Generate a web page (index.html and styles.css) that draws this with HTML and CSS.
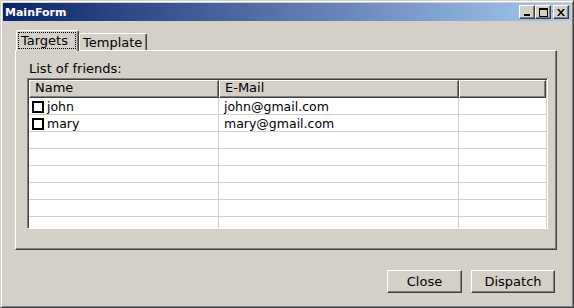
FILE: index.html
```html
<!DOCTYPE html>
<html lang="en">
<head>
    <meta charset="UTF-8">
    <title>MainForm</title>
    <link rel="stylesheet" href="styles.css">
</head>
<body>
    <div class="window">
        <div class="titlebar">
            <span class="title">MainForm</span>
            <div class="caption-buttons">
                <div class="cap-btn"><svg width="8" height="7" viewBox="0 0 8 7"><rect x="1" y="5" width="6" height="2" fill="#000"/></svg></div>
                <div class="cap-btn"><svg width="9" height="9" viewBox="0 0 9 9"><rect x="0.5" y="0.5" width="8" height="8" fill="none" stroke="#000"/><rect x="0" y="0" width="9" height="2" fill="#000"/></svg></div>
                <div class="cap-btn close"><svg width="8" height="7" viewBox="0 0 8 7"><path d="M0 0h2l2 2.5 2-2.5h2l-3 3.5 3 3.5h-2l-2-2.5-2 2.5h-2l3-3.5z" fill="#000"/></svg></div>
            </div>
        </div>

        <div class="client">
            <div class="tabs">
                <div class="tab active"><span class="focus">Targets</span></div>
                <div class="tab">Template</div>
            </div>
            <div class="tab-page">
                <div class="label">List of friends:</div>
                <div class="listview">
                    <div class="lv-header">
                        <div class="hcell">Name</div>
                        <div class="hcell">E-Mail</div>
                        <div class="hcell"></div>
                    </div>
                    <div class="lv-body">
                        <div class="row">
                            <div class="cell"><span class="check"></span>john</div>
                            <div class="cell">john@gmail.com</div>
                            <div class="cell"></div>
                        </div>
                        <div class="row">
                            <div class="cell"><span class="check"></span>mary</div>
                            <div class="cell">mary@gmail.com</div>
                            <div class="cell"></div>
                        </div>
                        <div class="row"><div class="cell"></div><div class="cell"></div><div class="cell"></div></div>
                        <div class="row"><div class="cell"></div><div class="cell"></div><div class="cell"></div></div>
                        <div class="row"><div class="cell"></div><div class="cell"></div><div class="cell"></div></div>
                        <div class="row"><div class="cell"></div><div class="cell"></div><div class="cell"></div></div>
                        <div class="row"><div class="cell"></div><div class="cell"></div><div class="cell"></div></div>
                        <div class="row"><div class="cell"></div><div class="cell"></div><div class="cell"></div></div>
                    </div>
                </div>
            </div>
            <div class="actions">
                <button class="btn close-btn">Close</button>
                <button class="btn dispatch-btn">Dispatch</button>
            </div>
        </div>
    </div>
</body>
</html>
```

FILE: styles.css
```css
body {
    margin: 0;
    background-color: #d4d0c8;
    font-family: "DejaVu Sans", Verdana, sans-serif;
    font-size: 12px;
    color: #000;
}

.window {
    width: 574px;
    height: 308px;
    box-sizing: border-box;
    padding: 2px;
    background-color: #d4d0c8;
    border: 1px solid;
    border-color: #d4d0c8 #404040 #404040 #d4d0c8;
    box-shadow: inset 1px 1px #fff, inset -1px -1px #808080;
    display: flex;
    flex-direction: column;
}

.titlebar {
    height: 18px;
    display: flex;
    align-items: center;
    justify-content: space-between;
    padding: 0 2px 0 2px;
    background: linear-gradient(to right, #0a246a, #a6caf0);
}

.title {
    color: #fff;
    font-weight: bold;
    font-size: 11px;
}

.caption-buttons {
    display: flex;
}

.cap-btn {
    width: 16px;
    height: 14px;
    box-sizing: border-box;
    background-color: #d4d0c8;
    border: 1px solid;
    border-color: #fff #404040 #404040 #fff;
    box-shadow: inset -1px -1px #808080;
    display: flex;
    align-items: center;
    justify-content: center;
}

.cap-btn.close {
    margin-left: 2px;
}

.client {
    flex: 1;
    display: flex;
    flex-direction: column;
    padding: 9px 14px 0 12px;
}

.tabs {
    display: flex;
    align-items: flex-end;
    height: 20px;
    position: relative;
    z-index: 1;
    padding-left: 1px;
}

.tab {
    box-sizing: border-box;
    height: 17px;
    width: 68px;
    padding: 1px 0 0 3px;
    background-color: #d4d0c8;
    border: 1px solid;
    border-bottom: none;
    border-color: #fff #404040 #404040 #fff;
    border-radius: 2px 2px 0 0;
    box-shadow: inset -1px 0 #808080;
    font-size: 13px;
    line-height: 15px;
}

.tab.active {
    height: 21px;
    width: 63px;
    margin-bottom: -1px;
    padding: 2px 3px 0 2px;
}

.focus {
    display: block;
    outline: 1px dotted #000;
    padding: 0 0 0 2px;
    line-height: 15px;
}

.tab-page {
    height: 200px;
    box-sizing: border-box;
    border: 1px solid;
    border-color: #fff #404040 #404040 #fff;
    box-shadow: inset -1px -1px #808080;
    padding: 10px 10px 0 11px;
}

.label {
    height: 17px;
    font-size: 13px;
    line-height: 16px;
    padding-left: 2px;
}

.listview {
    width: 521px;
    height: 151px;
    box-sizing: border-box;
    border: 1px solid;
    border-color: #808080 #fff #fff #808080;
    box-shadow: inset 1px 1px #404040, inset -1px -1px #d4d0c8;
    padding: 1px;
    overflow: hidden;
}

.lv-header {
    display: grid;
    grid-template-columns: 190px 240px 1fr;
    height: 18px;
}

.hcell {
    box-sizing: border-box;
    border: 1px solid;
    border-color: #fff #404040 #404040 #fff;
    box-shadow: inset -1px -1px #808080;
    padding: 0 0 0 5px;
    font-size: 13px;
    line-height: 14px;
}

.lv-body {
    background-color: #fff;
    height: 131px;
    overflow: hidden;
}

.row {
    display: grid;
    grid-template-columns: 190px 240px 1fr;
    height: 17px;
    box-sizing: border-box;
    border-bottom: 1px solid #d4d0c8;
}

.cell {
    display: flex;
    align-items: center;
    padding: 1px 0 0 5px;
    border-right: 1px solid #d4d0c8;
    font-size: 12.5px;
}

.cell:first-child {
    padding-left: 3px;
}

.cell:last-child {
    border-right: none;
}

.check {
    width: 12px;
    height: 12px;
    box-sizing: border-box;
    border: 2px solid #000;
    background-color: #fff;
    margin-right: 3px;
}

.actions {
    display: flex;
    justify-content: flex-end;
    gap: 9px;
    padding: 20px 2px 0 0;
}

.btn {
    height: 23px;
    box-sizing: border-box;
    background-color: #d4d0c8;
    border: 1px solid;
    border-color: #fff #404040 #404040 #fff;
    box-shadow: inset -1px -1px #808080;
    font-family: "DejaVu Sans", Verdana, sans-serif;
    font-size: 13px;
    color: #000;
    padding: 0;
}

.close-btn {
    width: 75px;
}

.dispatch-btn {
    width: 84px;
}
```
